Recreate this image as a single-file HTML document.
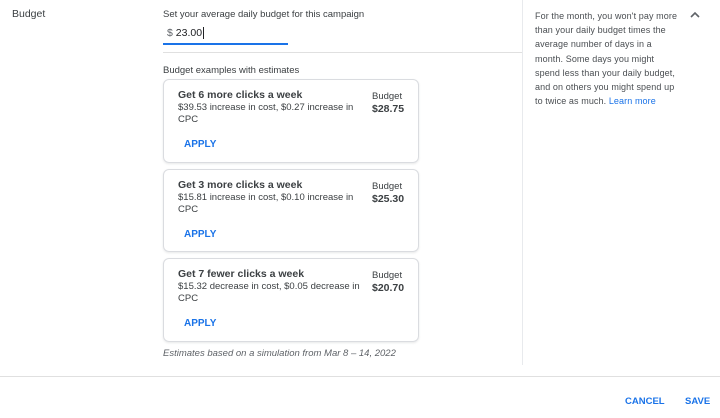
<!DOCTYPE html>
<html><head><style>
*{margin:0;padding:0;box-sizing:border-box}
body{width:720px;height:418px;background:#fff;font-family:"Liberation Sans",Arial,sans-serif;color:#3c4043;position:relative;overflow:hidden}
.a{position:absolute}
.card{position:absolute;left:163px;width:256px;border:1px solid #dadce0;border-radius:6px;box-shadow:0 1px 2px rgba(60,64,67,.12)}
.t{position:absolute;left:14px;top:9px;font-size:10.5px;font-weight:bold;color:#3c4043}
.d{position:absolute;left:14px;top:22px;width:185px;font-size:9.5px;line-height:12px;color:#3c4043}
.b{position:absolute;left:208px;top:11px;font-size:9.5px;line-height:12px}
.b b{font-size:10.5px;color:#3c4043}
.ap{position:absolute;left:20px;top:59px;font-size:10px;font-weight:bold;color:#1a73e8;letter-spacing:0}
</style></head><body>
<div class="a" style="left:12px;top:8px;font-size:10.5px;color:#3c4043">Budget</div>
<div class="a" style="left:163px;top:9px;font-size:9.5px">Set your average daily budget for this campaign</div>
<div class="a" style="left:167px;top:27px;font-size:10.5px;color:#202124"><span style="color:#5f6368">$</span> 23.00<span style="border-left:1px solid #202124;margin-left:1px"></span></div>
<div class="a" style="left:163px;top:43px;width:125px;height:2px;background:#1a73e8"></div>
<div class="a" style="left:163px;top:52px;width:359px;height:1px;background:#e0e0e0"></div>
<div class="a" style="left:163px;top:65px;font-size:9.5px">Budget examples with estimates</div>
<div class="card" style="top:79px;height:84px"><div class="t">Get 6 more clicks a week</div><div class="d">$39.53 increase in cost, $0.27 increase in CPC</div><div class="b">Budget<br><b>$28.75</b></div><div class="ap">APPLY</div></div>
<div class="card" style="top:169px;height:83px"><div class="t">Get 3 more clicks a week</div><div class="d">$15.81 increase in cost, $0.10 increase in CPC</div><div class="b">Budget<br><b>$25.30</b></div><div class="ap">APPLY</div></div>
<div class="card" style="top:258px;height:84px"><div class="t">Get 7 fewer clicks a week</div><div class="d">$15.32 decrease in cost, $0.05 decrease in CPC</div><div class="b">Budget<br><b>$20.70</b></div><div class="ap">APPLY</div></div>
<div class="a" style="left:163px;top:348px;font-size:9.5px;font-style:italic;color:#5f6368">Estimates based on a simulation from Mar 8 – 14, 2022</div>
<div class="a" style="left:522px;top:0;width:1px;height:365px;background:#e8eaed"></div>
<div class="a" style="left:535px;top:9px;white-space:nowrap;font-size:9px;line-height:14.2px;color:#4a4e52;letter-spacing:.1px">For the month, you won't pay more<br>than your daily budget times the<br>average number of days in a<br>month. Some days you might<br>spend less than your daily budget,<br>and on others you might spend up<br>to twice as much. <span style="color:#1a73e8">Learn more</span></div>
<svg class="a" style="left:689px;top:10px" width="12" height="10"><path d="M2 7 L6 3 L10 7" fill="none" stroke="#5f6368" stroke-width="1.6"/></svg>
<div class="a" style="left:0;top:376px;width:720px;height:1px;background:#e0e0e0"></div>
<div class="a" style="left:625px;top:396px;font-size:9.5px;font-weight:bold;color:#1a73e8">CANCEL</div>
<div class="a" style="left:685px;top:396px;font-size:9.5px;font-weight:bold;color:#1a73e8">SAVE</div>
</body></html>
